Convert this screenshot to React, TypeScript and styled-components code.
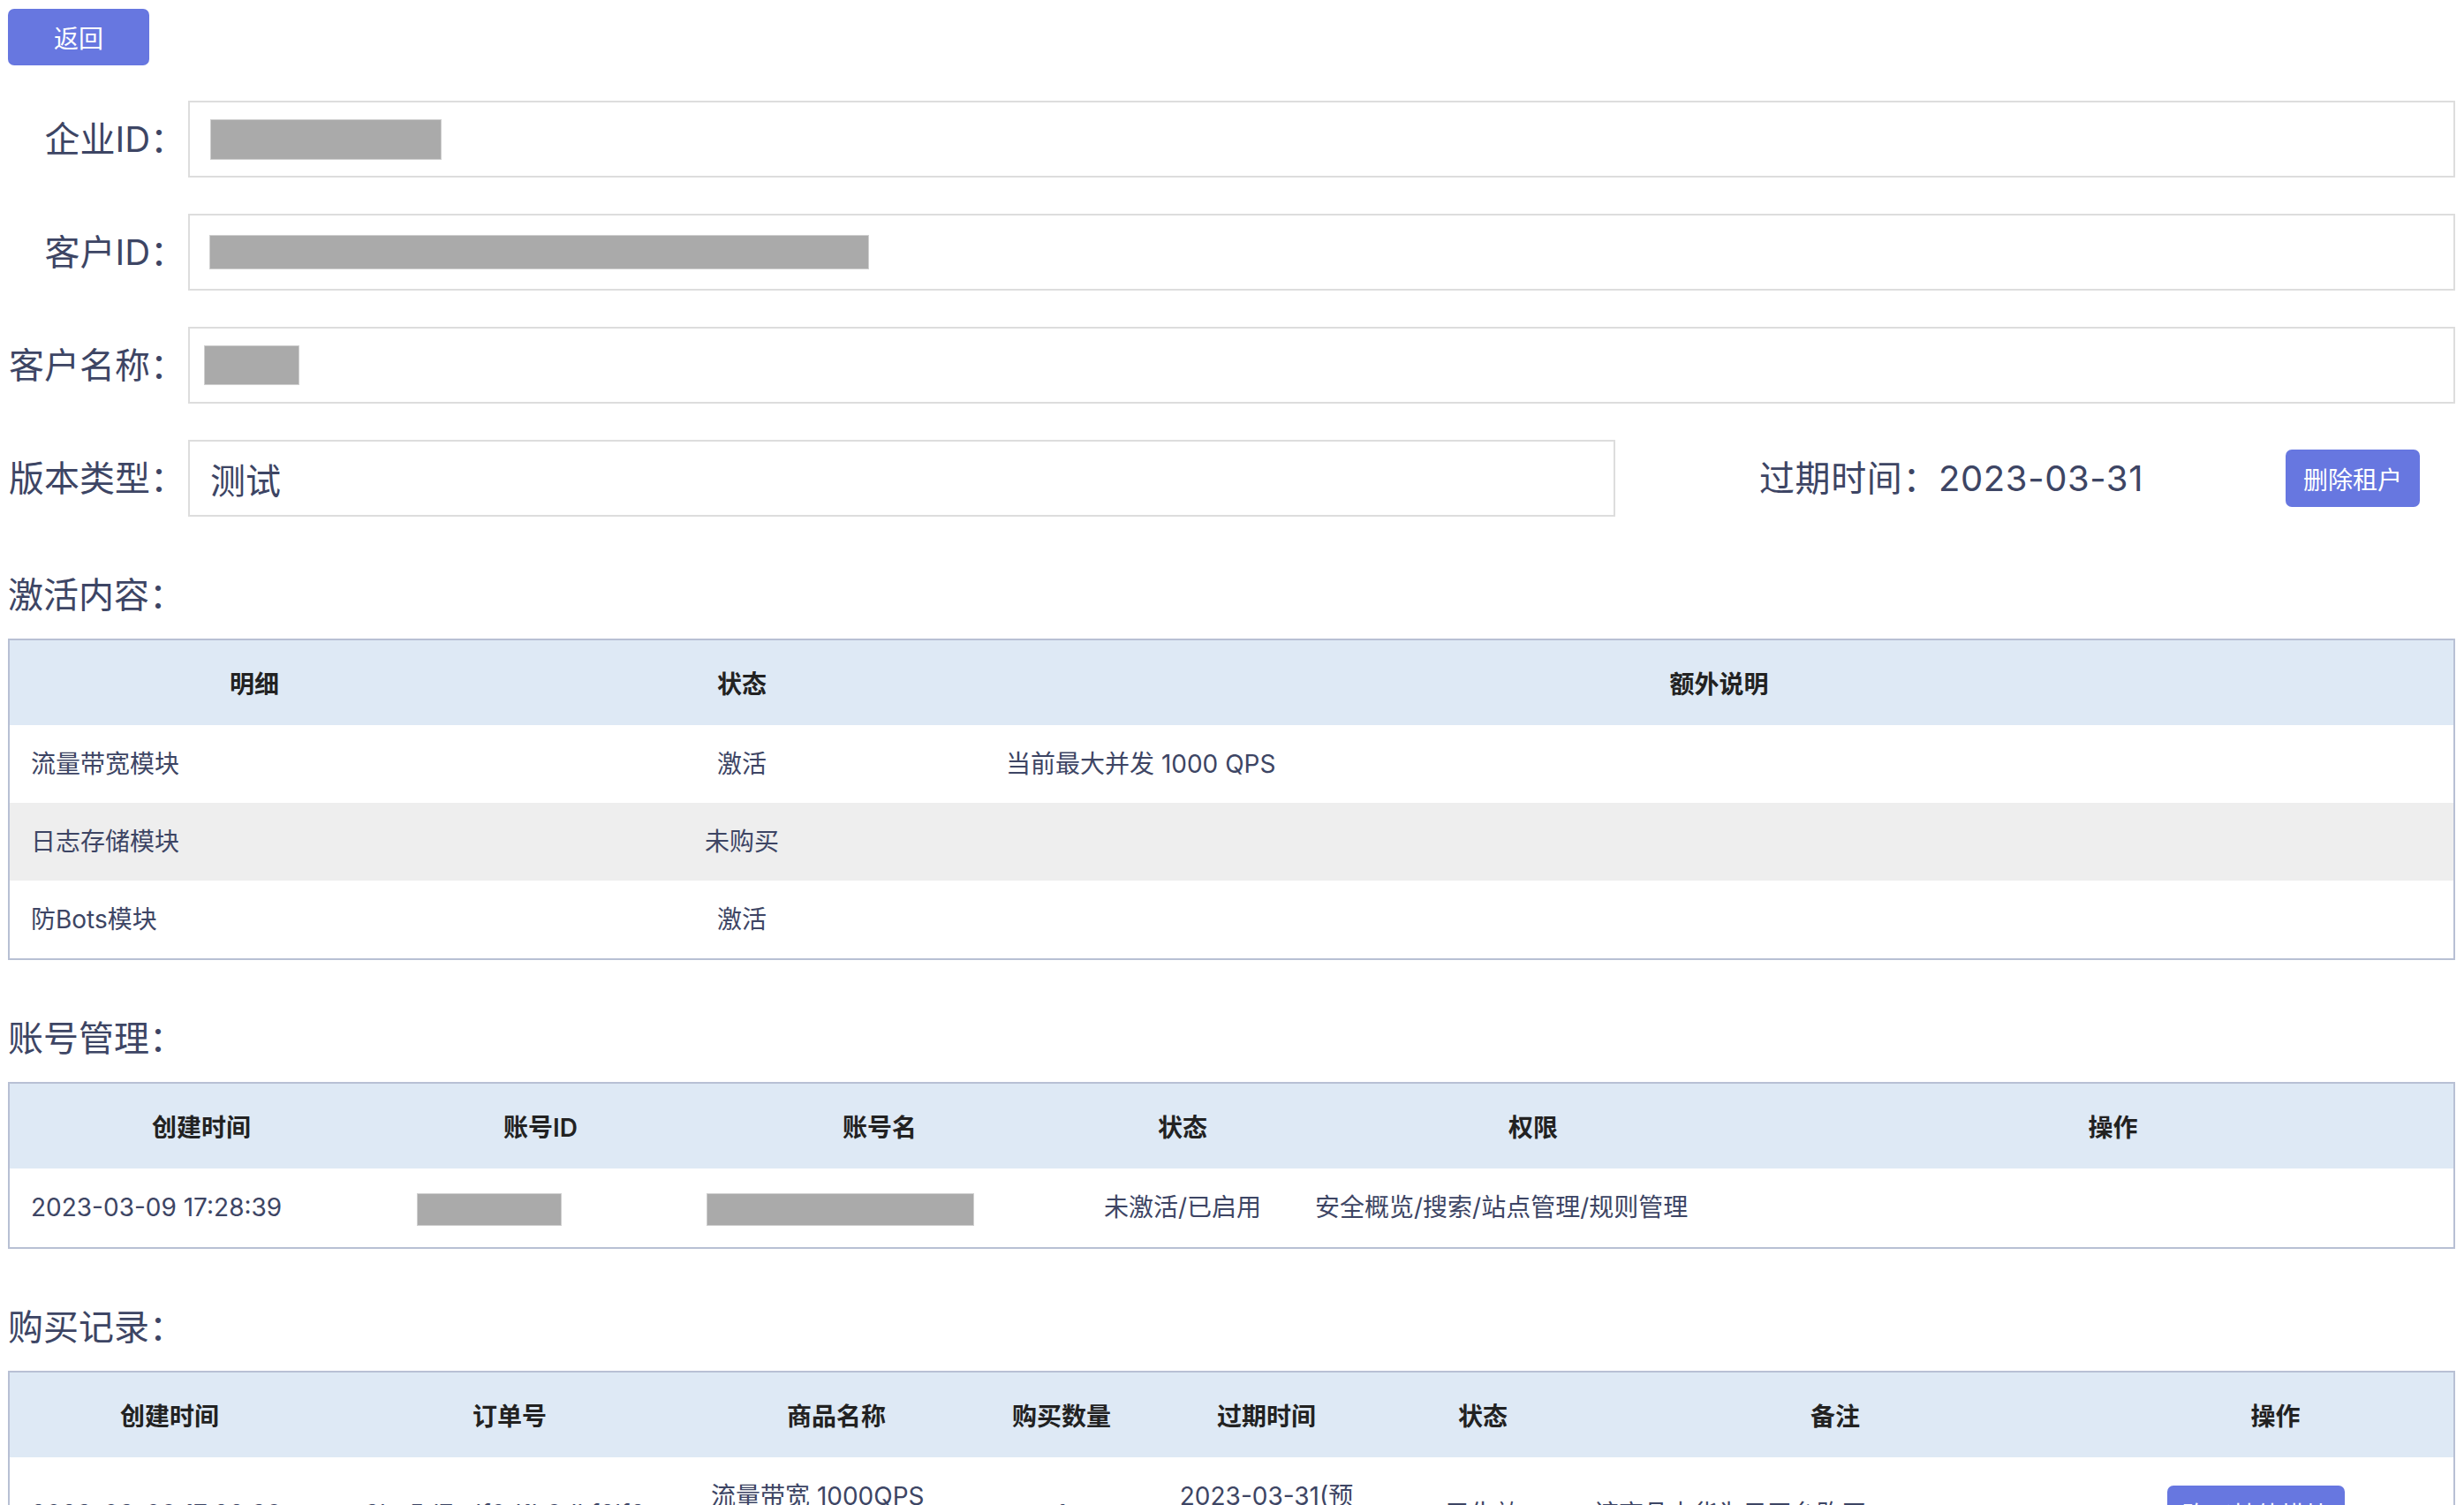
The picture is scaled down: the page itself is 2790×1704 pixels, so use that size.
import React from 'react';
import styled, { createGlobalStyle } from 'styled-components';

const GlobalStyle = createGlobalStyle`
  html, body {
    margin: 0;
    padding: 0;
    background: #ffffff;
  }
  html {
    scrollbar-width: none;
  }
  body {
    font-family: Inter, "Noto Sans CJK SC", sans-serif;
    color: #3d4564;
  }
  * {
    box-sizing: border-box;
  }
`;

const Page = styled.div`
  padding: 10px 10px 60px 9px;
`;

const PrimaryButton = styled.button<{ $w: number; $h: number }>`
  display: inline-flex;
  align-items: center;
  justify-content: center;
  width: ${p => p.$w}px;
  height: ${p => p.$h}px;
  padding: 0;
  border: none;
  border-radius: 7px;
  background: #6777e0;
  color: #ffffff;
  font-family: inherit;
  font-size: 28px;
  cursor: pointer;
`;

const Form = styled.div`
  display: flex;
  flex-direction: column;
  gap: 41px;
  margin-top: 40px;
`;

const FieldRow = styled.div`
  display: flex;
  align-items: center;
`;

const Label = styled.label`
  flex: none;
  width: 201px;
  margin-right: 3px;
  text-align: right;
  font-size: 40px;
  line-height: 56px;
  color: #3d4564;
  white-space: nowrap;
`;

const Field = styled.div<{ $width?: number }>`
  ${p => (p.$width ? `flex: 0 0 ${p.$width}px;` : 'flex: 1;')}
  display: flex;
  align-items: center;
  height: 87px;
  padding-left: 23px;
  border: 2px solid #dddddd;
  font-size: 40px;
  color: #3d4564;
`;

const Redacted = styled.span<{ $w: number; $h: number; $ml?: number }>`
  display: inline-block;
  vertical-align: middle;
  width: ${p => p.$w}px;
  height: ${p => p.$h}px;
  margin-left: ${p => p.$ml ?? 0}px;
  background: #aaaaaa;
  border: 1px solid #cfcfcf;
`;

const Expiry = styled.span`
  margin-left: 163px;
  font-size: 40px;
  line-height: 56px;
  letter-spacing: 0.6px;
  color: #3d4564;
  white-space: nowrap;
`;

const RowEnd = styled.div`
  margin-left: auto;
  margin-right: 40px;
`;

const SectionTitle = styled.h2`
  margin: 61px 0 21px;
  font-size: 40px;
  line-height: 56px;
  font-weight: 400;
  color: #3d4564;
`;

const Table = styled.table`
  width: 100%;
  table-layout: fixed;
  border-collapse: separate;
  border-spacing: 0;
  border: 2px solid #b8c0d4;
`;

const Col = styled.col<{ $w?: number }>`
  width: ${p => (p.$w ? `${p.$w}px` : 'auto')};
`;

const Th = styled.th`
  height: 96px;
  padding: 0 24px;
  background: #dee9f5;
  font-size: 28px;
  font-weight: 600;
  color: #222222;
  text-align: center;
`;

const Tr = styled.tr<{ $striped?: boolean }>`
  background: ${p => (p.$striped ? '#eeeeee' : '#ffffff')};
`;

const Td = styled.td<{ $align?: 'left' | 'center' }>`
  padding: 24px;
  font-size: 28px;
  line-height: 40px;
  color: #3d4564;
  text-align: ${p => p.$align ?? 'left'};
  vertical-align: middle;
`;

const ActionCell = styled(Td)`
  padding-right: 68px;
  text-align: center;
`;

const modules = [
  { name: '流量带宽模块', status: '激活', note: '当前最大并发 1000 QPS' },
  { name: '日志存储模块', status: '未购买', note: '' },
  { name: '防Bots模块', status: '激活', note: '' },
];

const App: React.FC = () => {
  return (
    <Page>
      <GlobalStyle />
      <PrimaryButton $w={160} $h={64}>返回</PrimaryButton>

      <Form>
        <FieldRow>
          <Label>企业ID：</Label>
          <Field>
            <Redacted $w={262} $h={46} />
          </Field>
        </FieldRow>
        <FieldRow>
          <Label>客户ID：</Label>
          <Field>
            <Redacted $w={747} $h={39} $ml={-1} />
          </Field>
        </FieldRow>
        <FieldRow>
          <Label>客户名称：</Label>
          <Field>
            <Redacted $w={108} $h={45} $ml={-7} />
          </Field>
        </FieldRow>
        <FieldRow>
          <Label>版本类型：</Label>
          <Field $width={1616}>测试</Field>
          <Expiry>过期时间：2023-03-31</Expiry>
          <RowEnd>
            <PrimaryButton $w={152} $h={65}>删除租户</PrimaryButton>
          </RowEnd>
        </FieldRow>
      </Form>

      <SectionTitle>激活内容：</SectionTitle>
      <Table>
        <colgroup>
          <Col $w={554} />
          <Col $w={550} />
          <Col />
        </colgroup>
        <thead>
          <tr>
            <Th>明细</Th>
            <Th>状态</Th>
            <Th>额外说明</Th>
          </tr>
        </thead>
        <tbody>
          {modules.map((m, i) => (
            <Tr key={m.name} $striped={i % 2 === 1}>
              <Td>{m.name}</Td>
              <Td $align="center">{m.status}</Td>
              <Td>{m.note}</Td>
            </Tr>
          ))}
        </tbody>
      </Table>

      <SectionTitle>账号管理：</SectionTitle>
      <Table>
        <colgroup>
          <Col $w={434} />
          <Col $w={334} />
          <Col $w={434} />
          <Col $w={252} />
          <Col $w={542} />
          <Col />
        </colgroup>
        <thead>
          <tr>
            <Th>创建时间</Th>
            <Th>账号ID</Th>
            <Th>账号名</Th>
            <Th>状态</Th>
            <Th>权限</Th>
            <Th>操作</Th>
          </tr>
        </thead>
        <tbody>
          <Tr>
            <Td>2023-03-09 17:28:39</Td>
            <Td>
              <Redacted $w={164} $h={37} $ml={3} />
            </Td>
            <Td>
              <Redacted $w={303} $h={37} $ml={-3} />
            </Td>
            <Td $align="center">未激活/已启用</Td>
            <Td>安全概览/搜索/站点管理/规则管理</Td>
            <Td />
          </Tr>
        </tbody>
      </Table>

      <SectionTitle>购买记录：</SectionTitle>
      <Table>
        <colgroup>
          <Col $w={362} />
          <Col $w={408} />
          <Col $w={332} />
          <Col $w={178} />
          <Col $w={286} />
          <Col $w={204} />
          <Col $w={594} />
          <Col />
        </colgroup>
        <thead>
          <tr>
            <Th>创建时间</Th>
            <Th>订单号</Th>
            <Th>商品名称</Th>
            <Th>购买数量</Th>
            <Th>过期时间</Th>
            <Th>状态</Th>
            <Th>备注</Th>
            <Th>操作</Th>
          </tr>
        </thead>
        <tbody>
          <Tr>
            <Td>2023-03-09 17:28:39</Td>
            <Td>a3bc5d7edf0d1b9dkf2lf8</Td>
            <Td>流量带宽 1000QPS（年付）</Td>
            <Td $align="center">1</Td>
            <Td $align="center">
              2023-03-31(预
              <br />
              计)
            </Td>
            <Td $align="center">已生效</Td>
            <Td>该商品由华为云平台购买</Td>
            <ActionCell>
              <PrimaryButton $w={201} $h={64}>购买其他模块</PrimaryButton>
            </ActionCell>
          </Tr>
        </tbody>
      </Table>
    </Page>
  );
};

export default App;
